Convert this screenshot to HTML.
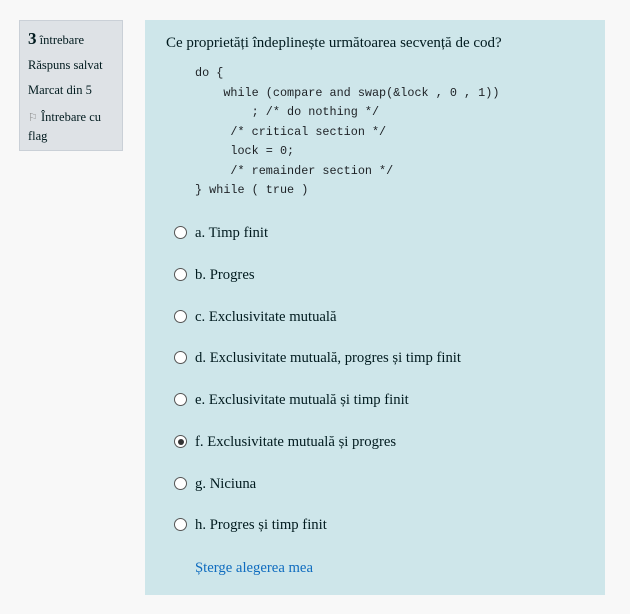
<!DOCTYPE html>
<html><head><meta charset="utf-8"><style>
body{margin:0;background:#f8f8f8;width:630px;height:614px;position:relative;font-family:"Liberation Serif",serif;color:#001a1e;font-size:14px}
.info{position:absolute;left:19px;top:20px;width:104px;height:131px;background:#dee2e6;border:1px solid #cad0d7;box-sizing:border-box;padding:9px 8px;font-size:12.5px;line-height:18px}
.info div{margin-bottom:7px}
.content{position:absolute;left:145px;top:20px;width:460px;height:575px;background:#cee6ea}
.q{position:absolute;left:21px;top:15px;font-size:15px}
pre{position:absolute;left:50px;top:44px;margin:0;font-family:"Liberation Mono",monospace;font-size:11.8px;line-height:19.5px;color:#1d2125}
.opt{position:absolute;left:29px;font-size:14.7px;height:20px;line-height:20px}
.r{position:absolute;left:0;top:3px;width:11px;height:11px;border:1px solid #555;border-radius:50%;background:#fff}
.r.on::after{content:"";position:absolute;left:2.5px;top:2.5px;width:6px;height:6px;border-radius:50%;background:#333}
.opt span{position:absolute;left:21px;white-space:nowrap}
.link{position:absolute;left:50px;top:540px;color:#0f6cbf;font-size:14.7px}
</style></head><body>
<div class="info">
<div><b style="font-size:17px">3</b> întrebare</div>
<div>Răspuns salvat</div>
<div style="margin-bottom:9px">Marcat din 5</div>
<div><span style="color:#888;font-size:11px">⚐</span> Întrebare cu flag</div>
</div>
<div class="content">
<div class="q">Ce proprietăți îndeplinește următoarea secvență de cod?</div>
<pre>do {
    while (compare and swap(&amp;lock , 0 , 1))
        ; /* do nothing */
     /* critical section */
     lock = 0;
     /* remainder section */
} while ( true )</pre>
<div class="opt" style="top:203px"><i class="r"></i><span>a. Timp finit</span></div>
<div class="opt" style="top:245px"><i class="r"></i><span>b. Progres</span></div>
<div class="opt" style="top:287px"><i class="r"></i><span>c. Exclusivitate mutuală</span></div>
<div class="opt" style="top:328px"><i class="r"></i><span>d. Exclusivitate mutuală, progres și timp finit</span></div>
<div class="opt" style="top:370px"><i class="r"></i><span>e. Exclusivitate mutuală și timp finit</span></div>
<div class="opt" style="top:412px"><i class="r on"></i><span>f. Exclusivitate mutuală și progres</span></div>
<div class="opt" style="top:454px"><i class="r"></i><span>g. Niciuna</span></div>
<div class="opt" style="top:495px"><i class="r"></i><span>h. Progres și timp finit</span></div>
<div class="link">Șterge alegerea mea</div>
</div>
</body></html>
